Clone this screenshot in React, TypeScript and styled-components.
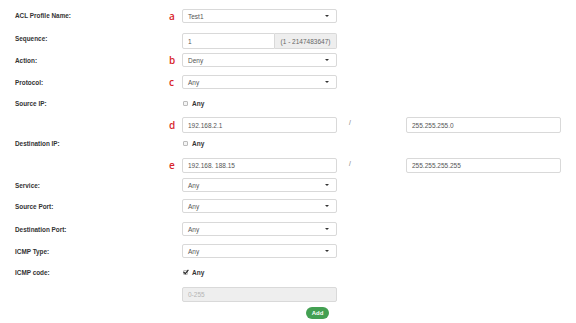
import React from "react";
import styled, { createGlobalStyle } from "styled-components";

const Global = createGlobalStyle`
  html, body { margin: 0; padding: 0; background: #ffffff; }
  body { font-family: "Liberation Sans", Arial, sans-serif; }
  * { box-sizing: border-box; }
`;

const Form = styled.div`
  width: 576px;
  height: 323px;
  padding-left: 15px;
  display: flex;
  flex-direction: column;
  overflow: hidden;
`;

const Row = styled.div<{ $h: number; $mt: number }>`
  display: grid;
  grid-template-columns: 150px 17px 155px 69px 155px;
  align-items: center;
  height: ${(p) => p.$h}px;
  margin-top: ${(p) => p.$mt}px;
`;

const Label = styled.div<{ $shift?: number }>`
  grid-column: 1;
  font-size: 6.4px;
  font-weight: bold;
  color: #333;
  white-space: nowrap;
  margin-bottom: ${(p) => p.$shift ?? 0}px;
`;

const Marker = styled.div`
  grid-column: 2;
  font-family: "Open Sans", "Liberation Sans", sans-serif;
  font-size: 10px;
  font-weight: 600;
  color: #d8262c;
  line-height: 1;
  padding-left: 4px;
  padding-bottom: 1px;
`;

const Control = styled.div`
  grid-column: 3;
  height: 100%;
  display: flex;
`;

const Field = styled.div<{ $disabled?: boolean }>`
  flex: 1;
  height: 100%;
  border: 1px solid #d9d9d9;
  border-radius: 2px;
  background: ${(p) => (p.$disabled ? "#eeeeee" : "#ffffff")};
  color: ${(p) => (p.$disabled ? "#b5b5b5" : "#555")};
  font-size: 6.5px;
  display: flex;
  align-items: center;
  padding: 0 5px;
  position: relative;
`;

const Caret = styled.span`
  position: absolute;
  right: 7px;
  top: 50%;
  margin-top: -1px;
  width: 0;
  height: 0;
  border-left: 2px solid transparent;
  border-right: 2px solid transparent;
  border-top: 2.5px solid #333;
`;

const GroupInput = styled(Field)`
  border-radius: 2px 0 0 2px;
`;

const Addon = styled.div`
  width: 62px;
  height: 100%;
  background: #eeeeee;
  border: 1px solid #d9d9d9;
  border-left: none;
  border-radius: 0 2px 2px 0;
  color: #666;
  font-size: 6.5px;
  display: flex;
  align-items: center;
  justify-content: center;
`;

const Slash = styled.div`
  grid-column: 4;
  font-size: 6.5px;
  color: #777;
  padding-left: 12px;
  padding-bottom: 5px;
`;

const Mask = styled.div`
  grid-column: 5;
  height: 100%;
  display: flex;
`;

const CheckWrap = styled.label`
  grid-column: 3;
  display: flex;
  align-items: center;
  gap: 4px;
  padding-left: 1px;
  font-size: 6.5px;
  font-weight: bold;
  color: #333;
`;

const Box = styled.span`
  width: 5px;
  height: 5px;
  border: 1px solid #bbb;
  border-radius: 1px;
  background: #f4f4f4;
  display: inline-flex;
  align-items: center;
  justify-content: center;
  overflow: visible;
`;

const ButtonCell = styled.div`
  grid-column: 3;
  display: flex;
  justify-content: flex-end;
  padding-right: 8px;
  height: 100%;
`;

const AddButton = styled.button`
  width: 23px;
  height: 12px;
  border: none;
  border-radius: 6px;
  background: #43a052;
  color: #fff;
  font-family: "Liberation Sans", Arial, sans-serif;
  font-size: 6px;
  font-weight: bold;
  padding: 0;
  display: flex;
  align-items: center;
  justify-content: center;
`;

const Select = ({ value }: { value: string }) => (
  <Control>
    <Field>
      {value}
      <Caret />
    </Field>
  </Control>
);

const Check = ({ checked }: { checked?: boolean }) => (
  <CheckWrap>
    <Box>
      {checked && (
        <svg width="6" height="6" viewBox="0 0 6 6" style={{ overflow: "visible" }}>
          <path d="M0.6 3 L2.3 4.6 L5.4 0.8" stroke="#222" strokeWidth="1.1" fill="none" />
        </svg>
      )}
    </Box>
    Any
  </CheckWrap>
);

export default function App() {
  return (
    <>
      <Global />
      <Form>
        <Row $h={14} $mt={9}>
          <Label $shift={2}>ACL Profile Name:</Label>
          <Marker>a</Marker>
          <Select value="Test1" />
        </Row>
        <Row $h={16} $mt={10}>
          <Label $shift={5}>Sequence:</Label>
          <Control>
            <GroupInput>1</GroupInput>
            <Addon>(1 - 2147483647)</Addon>
          </Control>
        </Row>
        <Row $h={14} $mt={4}>
          <Label>Action:</Label>
          <Marker>b</Marker>
          <Select value="Deny" />
        </Row>
        <Row $h={14} $mt={8}>
          <Label>Protocol:</Label>
          <Marker>c</Marker>
          <Select value="Any" />
        </Row>
        <Row $h={12} $mt={8}>
          <Label>Source IP:</Label>
          <Check />
        </Row>
        <Row $h={16} $mt={8}>
          <Marker>d</Marker>
          <Control>
            <Field>192.168.2.1</Field>
          </Control>
          <Slash>/</Slash>
          <Mask>
            <Field>255.255.255.0</Field>
          </Mask>
        </Row>
        <Row $h={12} $mt={4}>
          <Label>Destination IP:</Label>
          <Check />
        </Row>
        <Row $h={15} $mt={9}>
          <Marker>e</Marker>
          <Control>
            <Field>192.168. 188.15</Field>
          </Control>
          <Slash>/</Slash>
          <Mask>
            <Field>255.255.255.255</Field>
          </Mask>
        </Row>
        <Row $h={14} $mt={5}>
          <Label>Service:</Label>
          <Select value="Any" />
        </Row>
        <Row $h={14} $mt={7}>
          <Label>Source Port:</Label>
          <Select value="Any" />
        </Row>
        <Row $h={14} $mt={9}>
          <Label>Destination Port:</Label>
          <Select value="Any" />
        </Row>
        <Row $h={14} $mt={8}>
          <Label>ICMP Type:</Label>
          <Select value="Any" />
        </Row>
        <Row $h={12} $mt={8}>
          <Label>ICMP code:</Label>
          <Check checked />
        </Row>
        <Row $h={15} $mt={9}>
          <Control>
            <Field $disabled>0-255</Field>
          </Control>
        </Row>
        <Row $h={12} $mt={5}>
          <ButtonCell>
            <AddButton>Add</AddButton>
          </ButtonCell>
        </Row>
      </Form>
    </>
  );
}
